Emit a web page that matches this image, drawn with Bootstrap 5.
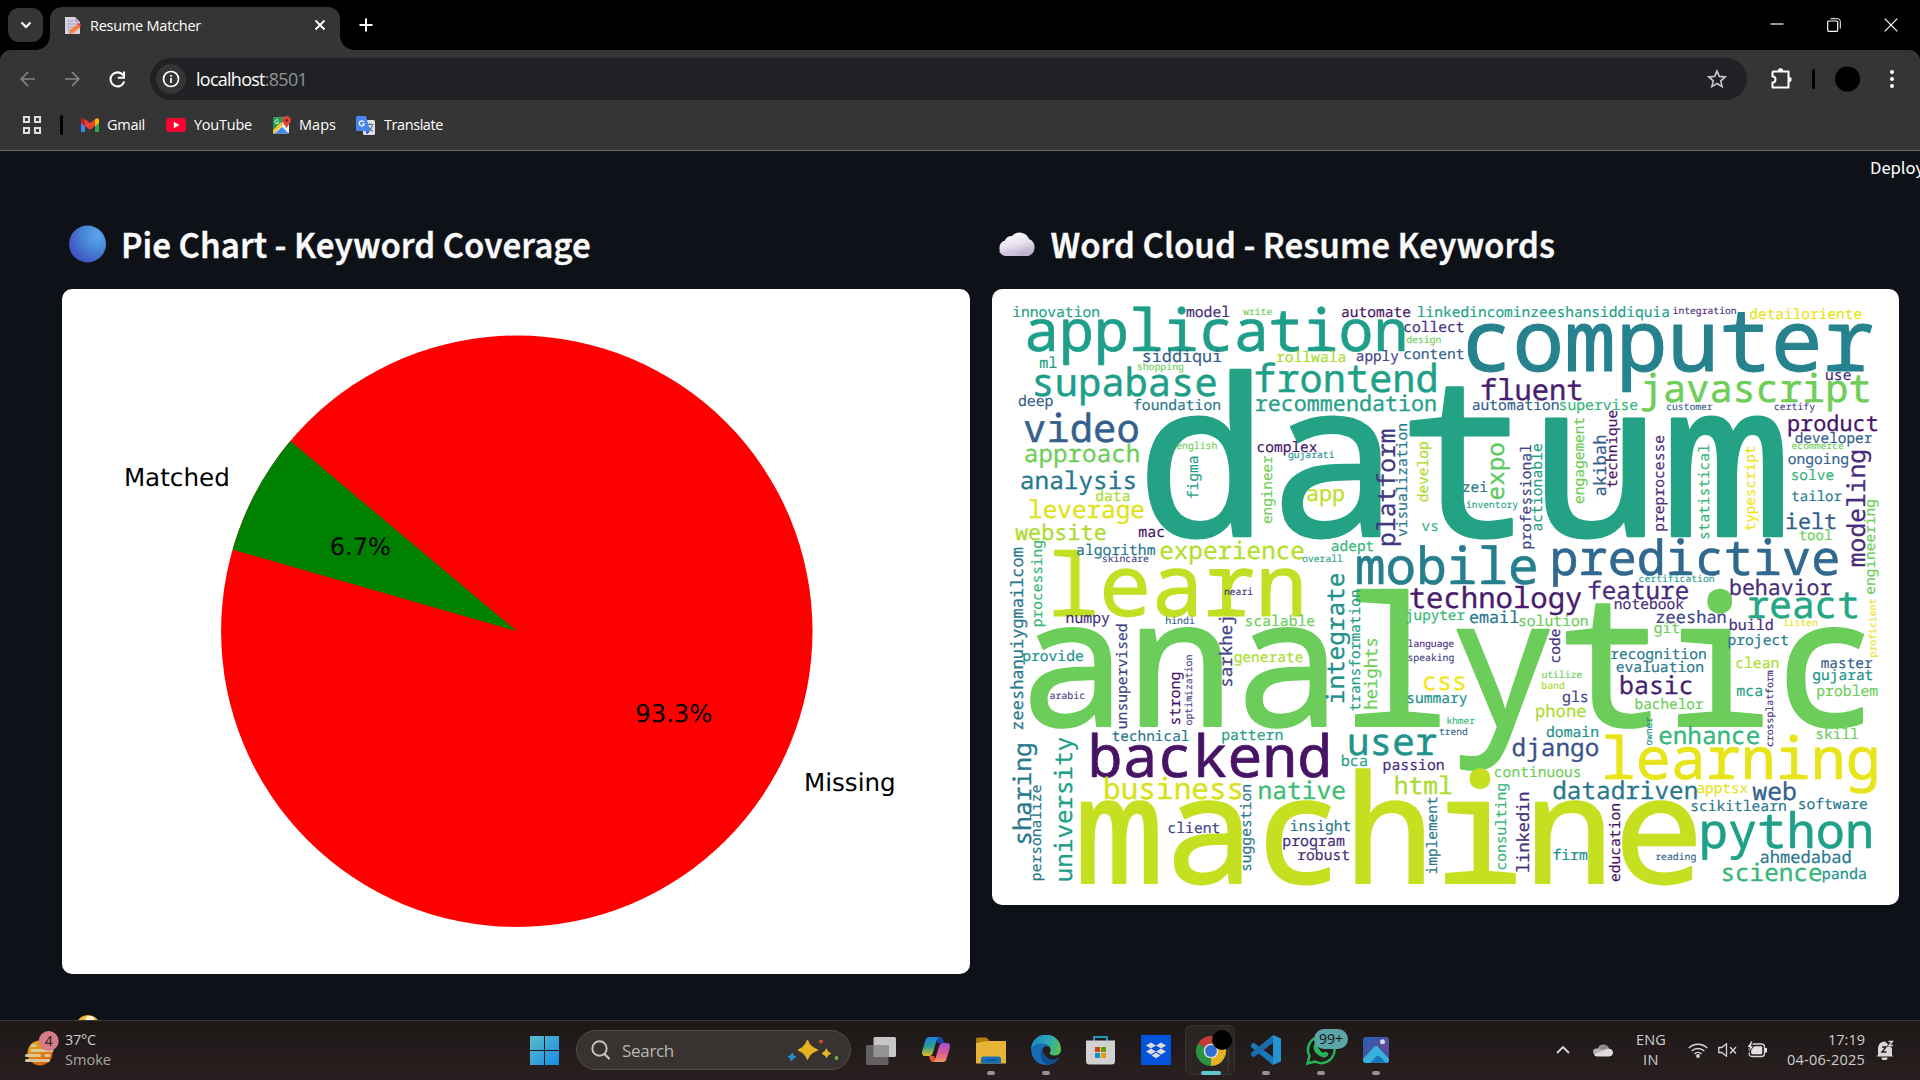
<!DOCTYPE html>
<html lang="en" data-bs-theme="dark">
<head>
<meta charset="utf-8">
<title>Resume Matcher</title>
<link href="https://cdn.jsdelivr.net/npm/bootstrap@5.3.0/dist/css/bootstrap.min.css" rel="stylesheet">
<style>
body{width:1920px;height:1080px;overflow:hidden;background:#0e1117;font-family:"Open Sans","Noto Sans",sans-serif;color:#fff}
svg{display:block;flex:none}
svg text{text-rendering:geometricPrecision}
#cloud text{stroke-linejoin:round}
.lbl{white-space:nowrap;line-height:20px;display:inline-block}
/* browser chrome */
.tabstrip{height:50px;background:#000;padding-left:8px}
.tabmenu{width:35px;height:34px;border-radius:11px;background:#353535;margin-top:8px}
.tab-active{width:290px;height:43px;margin:7px 0 0 7px;background:#353535;border-radius:12px 12px 0 0;padding:0 14px 7px 15px;position:relative}
.tab-active::before,.tab-active::after{content:"";position:absolute;bottom:0;width:14px;height:14px}
.tab-active::before{left:-14px;background:radial-gradient(circle at 0 0,transparent 13.5px,#353535 14px)}
.tab-active::after{right:-14px;background:radial-gradient(circle at 100% 0,transparent 13.5px,#353535 14px)}
.tab-title{font-size:14.5px;color:#fff;margin-left:9px;margin-top:1px}
.newtab{margin:18px 0 0 19px}
.wincontrols{gap:43px;padding-right:22px}
.chromebars{height:101px;background:#000;border-bottom:1px solid #666}
.chromeinner{height:100px;background:#353535;border-radius:11px 11px 0 0}
.toolbar{height:58px;padding:0 20px}
.omnibox{width:1597px;height:42px;border-radius:21px;background:#202124;margin:0 0 0 24px;padding:0 20px 0 6px}
.siteinfo{width:30px;height:30px;border-radius:50%;background:#353535}
.address{font-size:18px;margin-left:10px;line-height:24px}
.address span{color:#8f9193}
.vsep{width:3px;height:20px;background:#000;border-radius:2px}
.bookmarks{height:34px;padding-left:22px;font-size:14.5px}
/* application */
.appview{height:869px;background:#0e1117;padding-left:62px;overflow:hidden}
.appbar{height:54px;font-family:"Source Sans Pro","Source Sans 3","Noto Sans CJK SC",sans-serif;font-size:18.5px}
.deploy{margin-left:1808px;margin-top:7px}
.charts{gap:22px}
.chartcol{width:907.5px}
.heading{font-family:"Source Sans Pro","Source Sans 3","Noto Sans CJK SC",sans-serif;font-weight:600;font-size:36px;height:84px;color:#fafafa;gap:15px;padding:0 0 0 6px;-webkit-text-stroke:.3px #fafafa}
.heading svg{margin-top:-6px}
.heading .lbl{line-height:44px}
.panel-w{background:#fff;border-radius:10px;overflow:hidden}
.nextsec{padding:40px 0 0 16px}
/* taskbar */
.taskbar{height:60px;border-top:1px solid #3b3735;background:linear-gradient(#1d1817,#2a1f20);color:#d0cecd;font-size:14.5px}
.weather{width:517px;padding-left:25px;gap:6px;line-height:20px;margin-top:-2px}
.tcell{width:55px;height:59px;position:relative}
.tcell .pip{position:absolute;left:24px;bottom:5px;width:8px;height:4px;border-radius:2px;background:#989492}
.tcell.on .pip{left:18px;width:20px;background:#62c6d0}
.tcell.on .plate{position:absolute;left:2px;top:4px;width:50px;height:50px;border:1px solid #3a3332;border-radius:6px;background:#2b2524}
.tcell.on .plate::after{content:"";position:absolute;right:5px;top:0;width:8px;height:48px;border-right:1px solid #403938;border-radius:0 6px 6px 0}
.tcell svg{position:relative;top:-.5px}
.tcell svg.profiled{left:3px;top:-3px}
.searchpill{width:275px;height:40px;margin:-1px 2px 0 4px;border-radius:20px;border:1px solid #524c4b;background:#383231;padding:0 11px 0 14px;color:#b9b7b6;font-size:17px}
.wabadge{position:absolute;left:21px;top:8px;width:34px;height:20px;border-radius:10px;background:#5ba5a8;color:#111;font-size:14px;line-height:20px;text-align:center}
.tray{padding-right:25px;margin-top:-2px}
</style>
</head>
<body class="d-flex flex-column">

<header>
  <div class="tabstrip d-flex">
    <div class="tabmenu d-flex align-items-center justify-content-center">
      <svg width="12" height="8" viewBox="0 0 12 8"><path d="M1.500 1.500 6 6l4.500-4.500" fill="none" stroke="#fff" stroke-width="2.200"/></svg>
    </div>
    <div class="tab-active d-flex align-items-center">
      <svg width="16" height="19" viewBox="0 0 16 19"><path d="M0 1h10l5 5v12H0z" fill="#d8cfe2"/><path d="M10 1v5h5z" fill="#b3a4c6"/><path d="M2.500 5h6M2.500 8h10M2.500 11h7M2.500 14h4" stroke="#a69aba" stroke-width="1.200"/><path d="m4 18 1-4 7.500-6 3 3L8 17z" fill="#f5803a"/><path d="m12 8 1.500-1.500L16 9l-1 2z" fill="#e34a5c"/></svg>
      <span class="lbl tab-title" data-w="111">Resume Matcher</span>
      <svg class="ms-auto" width="12" height="12" viewBox="0 0 12 12"><path d="m1.500 1.500 9 9m0-9-9 9" stroke="#fff" stroke-width="1.900"/></svg>
    </div>
    <svg class="newtab" width="14" height="14" viewBox="0 0 14 14"><path d="M7 .5v13M.5 7h13" stroke="#fff" stroke-width="2"/></svg>
    <div class="wincontrols d-flex ms-auto align-items-center">
      <svg width="14" height="14" viewBox="0 0 14 14"><path d="M.5 6h13" stroke="#fff" stroke-width="1.200"/></svg>
      <svg width="14" height="14" viewBox="0 0 14 14"><path d="M3.500.7h7.200a2.600 2.600 0 0 1 2.600 2.600v7.200" fill="none" stroke="#fff"/><rect x=".7" y="3" width="10" height="10.300" rx="1" fill="none" stroke="#fff" stroke-width="1.200"/></svg>
      <svg width="14" height="14" viewBox="0 0 14 14"><path d="m.7.7 12.600 12.600M13.300.7.7 13.300" stroke="#fff" stroke-width="1.200"/></svg>
    </div>
  </div>
  <div class="chromebars">
    <div class="chromeinner">
      <div class="toolbar d-flex align-items-center">
        <svg width="15" height="16" viewBox="0 0 15 16"><path d="M15 8H1.500M8 1 1.200 8 8 15" fill="none" stroke="#858585" stroke-width="1.700"/></svg>
        <svg style="margin-left:30px" width="15" height="16" viewBox="0 0 15 16"><path d="M0 8h13.500M7 1l6.800 7L7 15" fill="none" stroke="#858585" stroke-width="1.700"/></svg>
        <svg style="margin-left:29px" width="17" height="17" viewBox="0 0 17 17"><path d="M14.300 4.400A7 7 0 1 0 15.200 10.500" fill="none" stroke="#fff" stroke-width="2.100"/><path d="M15 .5v6.200H8.800" fill="none" stroke="#fff" stroke-width="2.100"/></svg>
        <div class="omnibox d-flex align-items-center">
          <span class="siteinfo d-flex align-items-center justify-content-center"><svg width="18" height="18" viewBox="0 0 18 18"><circle cx="9" cy="9" r="7.500" fill="none" stroke="#fff" stroke-width="1.700"/><path d="M9 8v5M9 5v1.700" stroke="#fff" stroke-width="1.700"/></svg></span>
          <span class="lbl address" data-w="111">localhost<span>:8501</span></span>
          <svg class="ms-auto" width="20" height="20" viewBox="0 0 20 20"><path d="m10 2 2.300 5.400 5.900.5-4.500 3.900 1.400 5.800-5.100-3.100-5.100 3.100 1.400-5.800L1.800 7.900l5.900-.5z" fill="none" stroke="#c7c7c7" stroke-width="1.600"/></svg>
        </div>
        <svg style="margin-left:23px" width="22" height="22" viewBox="0 0 22 22"><path d="M3.500 3.500h15v16h-16v-5a3 3 0 0 0 0-6v-4a1 1 0 0 1 1-1z" fill="none" stroke="#fff" stroke-width="2" stroke-linejoin="round"/><path d="M7.800 3a2.700 2.700 0 0 1 5.400 0zM19 8.800a2.600 2.600 0 0 1 0 5.200z" fill="#fff"/></svg>
        <span class="vsep" style="margin-left:20px"></span>
        <svg style="margin-left:20px" width="26" height="26" viewBox="0 0 26 26"><circle cx="12.500" cy="13" r="12.600" fill="#000"/></svg>
        <svg style="margin-left:28px" width="6" height="18" viewBox="0 0 6 18"><g fill="#fff"><circle cx="3" cy="2" r="2"/><circle cx="3" cy="9" r="2"/><circle cx="3" cy="16" r="2"/></g></svg>
      </div>
      <div class="bookmarks d-flex align-items-center">
        <svg width="20" height="20" viewBox="0 0 20 20"><path d="M2 2h5v5H2zM13 2h5v5h-5zM2 13h5v5H2zM13 13h5v5h-5z" fill="none" stroke="#ddd" stroke-width="2.100"/></svg>
        <span class="vsep" style="margin-left:18px"></span>
        <svg style="margin-left:18px" width="18" height="14" viewBox="0 0 18 14"><path d="M0 2v10.500Q0 14 1.500 14H4V5z" fill="#4285f4"/><path d="M18 2v10.500q0 1.500-1.500 1.500H14V5z" fill="#34a853"/><path d="M14 1.200 16 .2q2 0 2 2V5l-4 3z" fill="#fbbc04"/><path d="M4 1.200 9 5l5-3.800V8l-5 3.700L4 8z" fill="#ea4335"/><path d="M0 2.200Q.2.100 2 .1L4 1.200V8L0 5z" fill="#c5221f"/></svg>
        <span class="lbl" style="margin-left:8px" data-w="38">Gmail</span>
        <svg style="margin-left:21px" width="20" height="14" viewBox="0 0 20 14"><rect width="20" height="14" rx="3.500" fill="#ff0033"/><path d="m7.800 3.800 5.600 3.200-5.600 3.200z" fill="#fff"/></svg>
        <span class="lbl" style="margin-left:8px" data-w="58">YouTube</span>
        <svg style="margin-left:21px" width="18" height="18" viewBox="0 0 18 18"><rect y="1.500" width="16" height="16" rx="1.500" fill="#e8eaed"/><path d="M0 3q0-1.500 1.500-1.500H14L0 15.500z" fill="#1e9e54"/><path d="m0 14 7.500-7.500 2.500 2L1 17.500H0z" fill="#fbc21c"/><path d="m2 17.500 7-6.500 6.500 6.500z" fill="#4285f4"/><path d="M13.500 0a4.300 4.300 0 0 1 4.300 4.300c0 3-2.800 4-4.300 8-1.500-4-4.300-5-4.300-8A4.300 4.300 0 0 1 13.500 0z" fill="#e0453a"/><circle cx="13.500" cy="4.300" r="1.500" fill="#8b1f18"/><path d="M5.500 4.800a1.900 1.900 0 1 0 .1 1.500H4" fill="none" stroke="#e9f5ee" stroke-width="1"/></svg>
        <span class="lbl" style="margin-left:8px" data-w="37">Maps</span>
        <svg style="margin-left:20px" width="20" height="19" viewBox="0 0 20 19"><rect x="7" y="4" width="12" height="15" rx="1.500" fill="#dfe1e4"/><path d="M10.500 8.500h7M14 7v1.500M16.500 8.500q-1 5-5 6.500M12 10q1.500 4 5 5" stroke="#5e7a83" fill="none" stroke-width="1.200"/><path d="M1.500 0H10l4 15H1.500Q0 15 0 13.500v-12Q0 0 1.500 0z" fill="#4a86f0"/><path d="m9.500 15 4.500 0-3 3.500z" fill="#2f55c5"/><path d="M8 6a2.600 2.600 0 1 0 .4 2H6" fill="none" stroke="#fff" stroke-width="1.200"/></svg>
        <span class="lbl" style="margin-left:8px" data-w="59">Translate</span>
      </div>
    </div>
  </div>
</header>

<main class="appview">
  <div class="appbar d-flex"><span class="lbl deploy">Deploy</span></div>
  <div class="charts d-flex align-items-start">
    <section class="chartcol">
      <h3 class="heading d-flex align-items-center m-0">
        <svg width="38" height="38" viewBox="0 0 38 38"><defs><radialGradient id="orb" cx=".78" cy=".25" r=".85"><stop offset="0" stop-color="#5fa5ea"/><stop offset=".5" stop-color="#4586d5"/><stop offset="1" stop-color="#4350c0"/></radialGradient></defs><circle cx="19.500" cy="19" r="18.500" fill="url(#orb)"/></svg>
        <span class="lbl" data-size-w="470">Pie Chart - Keyword Coverage</span>
      </h3>
      <div class="panel-w">
        <svg width="908" height="685" viewBox="62 289 908 685" font-family="DejaVu Sans, sans-serif">
          <circle cx="516.800" cy="631.200" r="295.700" fill="red"/>
          <path d="M516.800 631.200 290.300 441.100A295.700 295.700 0 0 0 232.600 549.700z" fill="green"/>
          <g id="pielabels"></g>
        </svg>
      </div>
      <div class="nextsec"><svg width="20" height="24" viewBox="0 0 20 24"><circle cx="10" cy="13" r="12" fill="#f6b136"/><ellipse cx="12" cy="5" rx="4.500" ry="3" fill="#fff3d0"/></svg></div>
    </section>
    <section class="chartcol">
      <h3 class="heading d-flex align-items-center m-0">
        <svg width="38" height="25" viewBox="0 0 38 25"><defs><linearGradient id="puff" x1="0" y1="0" x2=".4" y2="1"><stop offset="0" stop-color="#fff"/><stop offset=".6" stop-color="#e7e2ee"/><stop offset="1" stop-color="#bfb2d3"/></linearGradient></defs><path d="M8 24a8 8 0 0 1-1-15.500A7 7 0 0 1 14 4 10 10 0 0 1 31 7a9 9 0 0 1-1 17z" fill="url(#puff)"/><path d="M8 24a8 8 0 0 1-7-5q8 3 14-2 2 5 7 7z" fill="#cfc5de" opacity=".8"/></svg>
        <span class="lbl" data-size-w="504.500">Word Cloud - Resume Keywords</span>
      </h3>
      <div class="panel-w">
        <svg id="cloud" width="907" height="616" viewBox="6 -3 2721 1848" font-family="Noto Sans Mono, DejaVu Sans Mono, monospace"></svg>
      </div>
    </section>
  </div>
</main>

<footer class="taskbar d-flex align-items-center">
  <div class="weather d-flex align-items-center">
    <svg width="34" height="38" viewBox="0 0 34 38"><defs><linearGradient id="sun" x1="0" y1="0" x2=".6" y2="1"><stop offset="0" stop-color="#e3b71c"/><stop offset="1" stop-color="#d9640e"/></linearGradient></defs><circle cx="15" cy="22" r="12.500" fill="url(#sun)"/><g stroke="#d8c79d" stroke-width="3" stroke-linecap="round"><path d="M7 14.500h3M7 19.500h20M1.500 24.500h13M21 24.500h3M1.500 29.500h22"/></g><circle cx="23.700" cy="10" r="10" fill="#d67c86"/><text x="19.700" y="15" font-size="14" fill="#221718">4</text></svg>
    <div class="d-flex flex-column"><span class="lbl align-self-start" data-w="31">37°C</span><span class="lbl align-self-start" style="color:#a9a5a4" data-w="46">Smoke</span></div>
  </div>
  <div class="tcell d-flex align-items-center justify-content-center"><svg width="29" height="29" viewBox="0 0 29 29"><defs><linearGradient id="win" x1="0" y1="0" x2="1" y2="1"><stop offset="0" stop-color="#5cbccb"/><stop offset="1" stop-color="#148ce6"/></linearGradient></defs><path d="M0 0h14v14H0zM15 0h14v14H15zM0 15h14v14H0zM15 15h14v14H15z" fill="url(#win)"/></svg></div>
  <div class="searchpill d-flex align-items-center">
    <svg width="19" height="20" viewBox="0 0 19 20"><circle cx="8.500" cy="8.500" r="7.200" fill="none" stroke="#c6c4c3" stroke-width="1.900"/><path d="m13.500 14 4.500 4.500" stroke="#c6c4c3" stroke-width="2.300" stroke-linecap="round"/></svg>
    <span class="lbl" style="margin:2px 0 0 12px" data-w="52">Search</span>
    <svg class="ms-auto" width="52" height="24" viewBox="0 0 52 24"><path d="M20.500 2Q22.500 9 31 12q-8.500 3-10.500 9.500Q18 15 11 12q7-3 9.500-10z" fill="#e5b421" stroke="#e5b421" stroke-linejoin="round"/><path d="M39.500 10q1 4 5 5.500-4 1.500-5 5-1.500-3.500-5-5 3.500-1.500 5-5.500z" fill="#e2b62c"/><path d="m5.500 15 1 3.200 2.500.8-3 1.200-1.500 2.800-1.200-3L1 18.500l3-1z" fill="#1e97d4" stroke="#1e97d4"/><circle cx="34" cy="3.500" r="1.900" fill="#c4561f"/><circle cx="49.500" cy="20" r="1.900" fill="#77b13d"/></svg>
  </div>
  <div class="tcell d-flex align-items-center justify-content-center"><svg width="30" height="29" viewBox="0 0 30 29"><rect x="7.500" y="1" width="22.500" height="20" rx="1.500" fill="#c6c6c6"/><rect y="9" width="22.500" height="20" rx="1.500" fill="#636160"/><path d="M7.500 9h15v12h-15z" fill="#959494"/></svg></div>
  <div class="tcell d-flex align-items-center justify-content-center"><svg width="28" height="26" viewBox="0 0 28 26"><defs><linearGradient id="cpa" x1="0" y1="0" x2="0" y2="1"><stop offset="0" stop-color="#1f82d8"/><stop offset=".5" stop-color="#2b9c94"/><stop offset="1" stop-color="#e6bb24"/></linearGradient><linearGradient id="cpb" x1="0" y1="0" x2="0" y2="1"><stop offset="0" stop-color="#a04ed6"/><stop offset=".55" stop-color="#dc5b90"/><stop offset="1" stop-color="#ee9857"/></linearGradient></defs><path d="M15 0h3q3 0 4 6h-7z" fill="#1745ad"/><path d="M7 0h10q-2 1-3.500 7l-2 7q-1.500 5-4 5H2q-3-1-1.500-6l3-10Q4.500 0 7 0z" fill="url(#cpa)"/><path d="M7 19h5l3 6h-4q-3 0-4-6z" fill="#e5502e"/><path d="M21 25H11q2-1 3.500-7l2-7q1.500-5 4-5H26q3 1 1.500 6l-3 10Q23.500 25 21 25z" fill="url(#cpb)"/></svg></div>
  <div class="tcell d-flex align-items-center justify-content-center"><svg width="30" height="27" viewBox="0 0 30 27"><path d="M0 2Q0 .5 1.500.5H10q1 0 2 1.500l2 3H0z" fill="#b37d0c"/><path d="M0 5.500 12 4h18v22.500H0z" fill="#e8b436"/><path d="M5 26.500V22q0-2.500 2.500-2.500h15Q25 19.500 25 22v4.500z" fill="#1470b8"/><path d="M9 23h12" stroke="#0c4e86" stroke-width="1.500"/></svg><i class="pip"></i></div>
  <div class="tcell d-flex align-items-center justify-content-center"><svg width="30" height="30" viewBox="0 0 30 30"><defs><linearGradient id="edg" x1="0" y1=".3" x2="1" y2=".6"><stop offset="0" stop-color="#1d87cd"/><stop offset=".6" stop-color="#2eadb0"/><stop offset="1" stop-color="#5cc14c"/></linearGradient></defs><path d="M0 15A15 15 0 0 1 30 14q0 6-6 6.500-5 .2-5.500-2.500Q20 16 19.500 14 18 9 11 9 4 9 0 15z" fill="url(#edg)"/><path d="M0 14q4-6 11-5.500 5 .5 7.500 3.500-7-2.500-7 4 .5 7 8 9 5 1 9-3Q24 30 15 30 1 29 0 14z" fill="#176db5"/><path d="M11.500 13q-4 6-.5 12 2.500 4 6 4.700 7-.7 10.500-6.700-4 2.500-8.500 1-7-2.500-7.500-11z" fill="#124f91"/></svg><i class="pip"></i></div>
  <div class="tcell d-flex align-items-center justify-content-center"><svg width="29" height="30" viewBox="0 0 29 30"><path d="M8 6V2h13v4" fill="none" stroke="#2397b9" stroke-width="2"/><path d="M0 5.500h29V26q0 3.500-3.500 3.500h-22Q0 29.500 0 26z" fill="#d2d1d0"/><path d="M9 12h5v5H9z" fill="#c9441e"/><path d="M15 12h5v5h-5z" fill="#699b0c"/><path d="M9 18h5v5H9z" fill="#118fc4"/><path d="M15 18h5v5h-5z" fill="#e49f08"/></svg></div>
  <div class="tcell d-flex align-items-center justify-content-center"><svg width="30" height="30" viewBox="0 0 30 30"><path d="M0 0h30v30H0z" fill="#0453dc"/><path d="m10 7.500 5 3-5 3-5-3zM20 7.500l5 3-5 3-5-3zM10 13.500l5 3-5 3-5-3zM20 13.500l5 3-5 3-5-3zM15 17.800l4.500 2.700-4.500 2.800-4.500-2.800z" fill="#dcdcdc"/><path d="m15 10.800 4.600 2.700-4.600 2.800-4.600-2.800z" fill="#0453dc"/></svg></div>
  <div class="tcell on d-flex align-items-center justify-content-center"><span class="plate"></span><svg class="profiled" width="36" height="36" viewBox="0 0 36 36"><path d="M15 21 2 13.500A15 15 0 0 1 28 13.500z" fill="#c43c32"/><path d="M15 21 2 13.500A15 15 0 0 0 15 36l6.500-11z" fill="#299344"/><path d="M15 21 15 36A15 15 0 0 0 28 13.500H15z" fill="#e4b125"/><circle cx="15" cy="21" r="7.300" fill="#e0e0e0"/><circle cx="15" cy="21" r="5.900" fill="#2f6fd2"/><circle cx="26" cy="10" r="10" fill="#000"/></svg><i class="pip"></i></div>
  <div class="tcell d-flex align-items-center justify-content-center"><svg width="30" height="30" viewBox="0 0 30 30"><path d="M22 0 30 3.500v23L22 30z" fill="#2493d4"/><path d="m0 10 2.500-2.500L22 22v8L0 12z" fill="#1878b8"/><path d="m0 20 2.500 2.500L22 8V0L0 18z" fill="#1a6cab"/></svg><i class="pip"></i></div>
  <div class="tcell d-flex align-items-center justify-content-center"><svg width="30" height="30" viewBox="0 0 30 30"><path d="M1.500 28.500 3.500 21A13.300 13.300 0 1 1 9 26.500z" fill="none" stroke="#26b556" stroke-width="2.500"/><path d="M9 8q2-2 3 0l1 2.500q.3 1-1 2 2 4 5.500 5.500 1-2 2-1.500l2.500 1.500q1 1-.5 3-3 3-8.500-.5T7.500 12q0-2.500 1.500-4z" fill="#26b556"/></svg><span class="wabadge">99+</span><i class="pip"></i></div>
  <div class="tcell d-flex align-items-center justify-content-center"><svg width="26" height="26" viewBox="0 0 26 26"><defs><linearGradient id="pho" x1="0" y1="0" x2="1" y2="1"><stop offset="0" stop-color="#1f62b4"/><stop offset=".6" stop-color="#5b4e9b"/><stop offset="1" stop-color="#394fa5"/></linearGradient></defs><rect width="26" height="26" rx="3" fill="url(#pho)"/><path d="m0 22 11-12q2-1.800 4 0l11 12v1q0 3-3 3H3q-3 0-3-3z" fill="#36b2dc"/><path d="m7 26 6-6.500q2-1.500 4 0l6 6.500z" fill="#1a77b9"/><circle cx="19.500" cy="4.800" r="2.500" fill="#d9dbe2"/></svg><i class="pip"></i></div>

  <div class="tray d-flex align-items-center ms-auto">
    <svg width="14" height="10" viewBox="0 0 14 10"><path d="m1 8 6-6 6 6" fill="none" stroke="#d8d6d5" stroke-width="1.900"/></svg>
    <svg style="margin-left:23px" width="20" height="14" viewBox="0 0 20 14"><path d="M4.500 6A6 6 0 0 1 16 5.500L10 9z" fill="#8d8b8a"/><path d="M4 5.500Q8 5 11 8l-7 4q-4-.5-4-3.500t4-3z" fill="#b5b3b2"/><path d="M1 11.500 11 7q2-1.500 4.500-1.500 4.500.5 4.500 4T16 13.500H4q-2.500 0-3-2z" fill="#dfdedd"/></svg>
    <div class="text-center d-flex flex-column align-items-center" style="margin-left:23px;width:30px"><span class="lbl" data-w="30">ENG</span><span class="lbl" data-w="16">IN</span></div>
    <svg style="margin-left:22px" width="20" height="16" viewBox="0 0 20 16"><g fill="none" stroke="#d8d6d5" stroke-width="1.500"><path d="M.8 6a13 13 0 0 1 18.400 0M3.700 9a9 9 0 0 1 12.600 0M6.500 12a5 5 0 0 1 7 0"/></g><circle cx="10" cy="14" r="1.900" fill="#d8d6d5"/></svg>
    <svg style="margin-left:10px" width="19" height="14" viewBox="0 0 19 14"><path d="M.8 4.500h3L8.500.8v12.400L3.800 9.500h-3z" fill="none" stroke="#d8d6d5" stroke-width="1.300"/><path d="m12 4 6 6.500m0-6.500-6 6.500" stroke="#d8d6d5" stroke-width="1.300"/></svg>
    <svg style="margin-left:10px" width="20" height="18" viewBox="0 0 20 18"><rect x="2" y="3" width="15.500" height="12.500" rx="3" fill="none" stroke="#d8d6d5" stroke-width="1.300"/><rect x="4.200" y="5.200" width="11" height="8" rx="1" fill="#e3e1e0"/><path d="M18 7h2v4.500h-2z" fill="#e3e1e0"/><path d="M4.500-.5-.2 6.500h2.700L1 12l6-7H4.500L6-.5z" fill="#e3e1e0" stroke="#231d1c" stroke-width="1"/></svg>
    <div class="d-flex flex-column align-items-end" style="margin-left:20px"><span class="lbl" data-w="37">17:19</span><span class="lbl" data-w="78">04-06-2025</span></div>
    <svg style="margin-left:11px" width="19" height="20" viewBox="0 0 19 20"><path d="M2 15V8a6.500 6.500 0 0 1 7-6.500l7 6.500v7l1 1.500H.5z" fill="#dad8d7"/><path d="M5.500 17.500h6a3 3 0 0 1-6 0z" fill="#dad8d7"/><path d="M6 7h4l-4 5h4.500M12 .8h4.500l-4.500 5H17" fill="none" stroke="#231d1c" stroke-width="1.400"/><path d="M12.500 1.500h4l-3.500 4h4" fill="none" stroke="#dad8d7" stroke-width="1.300"/></svg>
  </div>
</footer>

<script src="https://cdn.jsdelivr.net/npm/bootstrap@5.3.0/dist/js/bootstrap.bundle.min.js"></script>
<script>
// Spread each label's letters over its design width.
document.querySelectorAll('[data-w]').forEach(el => {
  const w = el.getBoundingClientRect().width, n = el.textContent.length;
  el.style.letterSpacing = ((+el.dataset.w - w) / n).toFixed(3) + 'px';
});
// Headings grow to their design width.
document.querySelectorAll('[data-size-w]').forEach(el => {
  const w = el.getBoundingClientRect().width;
  el.style.fontSize = (parseFloat(getComputedStyle(el).fontSize) * el.dataset.sizeW / w).toFixed(2) + 'px';
});

const ctx = document.createElement('canvas').getContext('2d');
// Adds a text whose ink runs from a to b along its line, standing on the given baseline.
// weight thickens the strokes by that share of the font size.
function inkText(parent, family, word, a, b, base, color, up, weight) {
  ctx.font = '1000px ' + family;
  const m = ctx.measureText(word);
  const k = Math.abs(b - a) / (m.actualBoundingBoxLeft + m.actualBoundingBoxRight);
  const off = m.actualBoundingBoxLeft * k;
  const t = document.createElementNS('http://www.w3.org/2000/svg', 'text');
  t.textContent = word;
  t.setAttribute('font-size', (1000 * k).toFixed(2));
  t.setAttribute('fill', color);
  if (weight) {
    t.setAttribute('stroke', color);
    t.setAttribute('stroke-width', (1000 * k * weight).toFixed(2));
  }
  if (up) t.setAttribute('transform', `translate(${base} ${a - off}) rotate(-90)`);
  else { t.setAttribute('x', (a + off).toFixed(2)); t.setAttribute('y', base); }
  parent.appendChild(t);
}

const pie = document.getElementById('pielabels');
[['Matched',126.200,227.700,485.800],['6.7%',331.200,389.800,555.400],['93.3%',636.700,711.400,722],['Missing',806.300,893.500,791.300]]
  .forEach(r => inkText(pie, '"DejaVu Sans"', r[0], r[1], r[2], r[3], '#000', false, 0));

const V = {0:'#440154',1:'#481467',2:'#472d7b',3:'#414487',4:'#355f8d',5:'#2a788e',6:'#21918c',7:'#1fa187',8:'#35b779',9:'#6ece58',a:'#addc30',b:'#e8e419'};
// word, start, end, baseline, colour
const across = `
datum 470 2383 737 #24a286
analytic 120 2625 1307 #6ccd5a
machine 274 2118 1780 #c5e021
learn 192 934 977 #c2df23
computer 1433 2647 243 #26828e
application 113 1243 182 #1f9e89
innovation 70 327 82 7
model 590 718 82 2
write 760 845 76 9
automate 1056 1261 82 1
linkedincominzeeshansiddiquia 1284 2036 82 7
collect 1243 1421 126 2
design 1250 1352 160 9
siddiqui 460 694 217 4
rollwala 860 1065 217 a
apply 1100 1225 214 3
content 1243 1421 208 4
ml 150 200 235 7
shopping 443 580 239 9
supabase 135 677 317 #1f9e89
frontend 797 1338 307 7
deep 86 188 348 4
foundation 432 690 361 5
recommendation 797 1337 364 7
video 103 443 457 4
approach 106 446 517 9
analysis 94 434 597 5
leverage 120 461 684 #dfe318
data 318 418 632 a
website 76 347 749 a
mac 447 522 741 1
algorithm 261 495 795 5
skincare 338 475 815 3
experience 511 941 806 #b5de2b
overall 938 1057 815 7
adept 1025 1150 782 8
english 560 680 478 9
complex 803 981 485 1
gujarati 895 1032 505 6
app 952 1062 632 #bddf26
vs 1296 1342 723 8
mobile 1102 1638 881 #277f8e
neari 704 788 915 2
integration 2050 2238 73 2
detailoriente 2280 2614 87 b
fluent 1475 1775 330 #481f70
javascript 1955 2637 337 9
use 2508 2582 269 2
automation 1448 1706 361 4
supervise 1710 1942 361 8
customer 2031 2167 360 4
certify 2354 2474 360 3
product 2396 2662 422 1
developer 2416 2646 458 4
ecommerce 2406 2560 478 9
ongoing 2395 2574 523 4
solve 2406 2530 571 8
tailor 2406 2555 633 5
ielt 2390 2537 718 4
tool 2428 2525 750 9
zei 1419 1491 605 5
inventory 1430 1583 653 7
predictive 1690 2543 855 #31688e
certification 1948 2172 876 7
behavior 2222 2526 915 2
feature 1796 2094 927 2
technology 1260 1774 953 #481b6d
react 2275 2602 985 #22a884
numpy 230 358 1000 2
hindi 528 613 1003 4
scalable 768 973 1008 9
provide 100 279 1113 6
generate 733 938 1117 a
arabic 180 283 1226 3
technical 367 596 1353 5
pattern 697 877 1350 7
backend 306 1015 1460 #471365
user 1078 1340 1395 #1f948c
bca 1056 1130 1427 7
passion 1181 1361 1441 2
business 346 754 1527 #d8e219
native 808 1064 1527 #3fbc73
html 1217 1384 1513 a
client 536 688 1628 3
insight 903 1081 1624 5
program 880 1063 1667 2
robust 924 1077 1711 2
summary 1253 1431 1240 6
css 1302 1424 1199 #f4e61e
jupyter 1247 1424 990 8
email 1439 1585 1000 5
language 1255 1391 1072 2
speaking 1255 1391 1112 3
khmer 1372 1454 1303 8
trend 1348 1431 1335 4
solution 1588 1793 1007 9
notebook 1875 2081 958 2
zeeshan 2000 2207 998 3
git 1993 2067 1030 9
build 2220 2348 1020 2
listen 2381 2482 1007 b
project 2216 2394 1065 5
recognition 1863 2147 1108 5
evaluation 1879 2139 1147 5
basic 1893 2105 1211 #481f70
bachelor 1937 2140 1256 9
clean 2239 2365 1134 a
master 2494 2647 1134 4
gujarat 2469 2647 1169 6
mca 2241 2316 1217 7
problem 2482 2663 1217 9
utilize 1656 1775 1163 9
band 1656 1723 1198 a
gls 1718 1792 1235 3
phone 1639 1787 1282 a
domain 1670 1824 1340 6
django 1568 1824 1399 #3b528b
enhance 2008 2307 1362 8
skill 2480 2604 1347 9
learning 1846 2660 1466 #e7e419
continuous 1515 1770 1461 9
datadriven 1690 2120 1527 5
apptsx 2122 2273 1510 b
web 2288 2417 1530 4
scikitlearn 2105 2387 1562 5
software 2427 2631 1557 5
python 2138 2643 1674 7
ahmedabad 2312 2582 1720 5
science 2198 2494 1772 8
panda 2499 2627 1768 6
firm 1690 1792 1710 6
reading 1997 2117 1710 4`;
const upward = `
figma 625 500 625 7
engineer 700 497 847 9
platform 765 418 1214 #443983
visualization 740 402 1250 5
develop 635 456 1315 a
processing 1008 753 155 8
zeeshanuiygmailcom 1318 773 98 5
expo 628 460 1541 #5ec962
professional 775 465 1624 3
actionable 722 462 1655 7
engagement 640 383 1782 9
akibah 616 437 1847 4
technique 592 362 1882 1
preprocesse 722 437 2022 2
statistical 746 465 2156 8
typescript 722 470 2295 #efe51c
modeling 828 482 2624 2
engineering 912 630 2655 9
unsupervised 1315 1003 411 3
strong 1302 1148 570 1
optimization 1305 1096 607 3
sarkhej 1188 983 727 3
integrate 1237 852 1062 6
transformation 1262 901 1110 7
heights 1255 1047 1161 9
sharing 1660 1362 123 5
personalize 1770 1486 153 5
university 1772 1343 245 7
suggestion 1742 1485 783 5
implement 1750 1522 1341 5
code 1117 1018 1711 2
crossplatform 1369 1142 2349 2
owner 1365 1282 1987 6
proficient 1100 928 2658 b
consulting 1738 1482 1547 8
linkedin 1745 1508 1617 2
education 1774 1542 1890 1`;
const cloud = document.getElementById('cloud');
[[across, false], [upward, true]].forEach(([rows, up]) =>
  rows.trim().split('\n').forEach(line => {
    const [w, a, b, y, c] = line.split(' ');
    inkText(cloud, '"Noto Sans Mono", "DejaVu Sans Mono"', w, +a, +b, +y, V[c] || c, up, .012);
  }));
</script>
</body>
</html>
